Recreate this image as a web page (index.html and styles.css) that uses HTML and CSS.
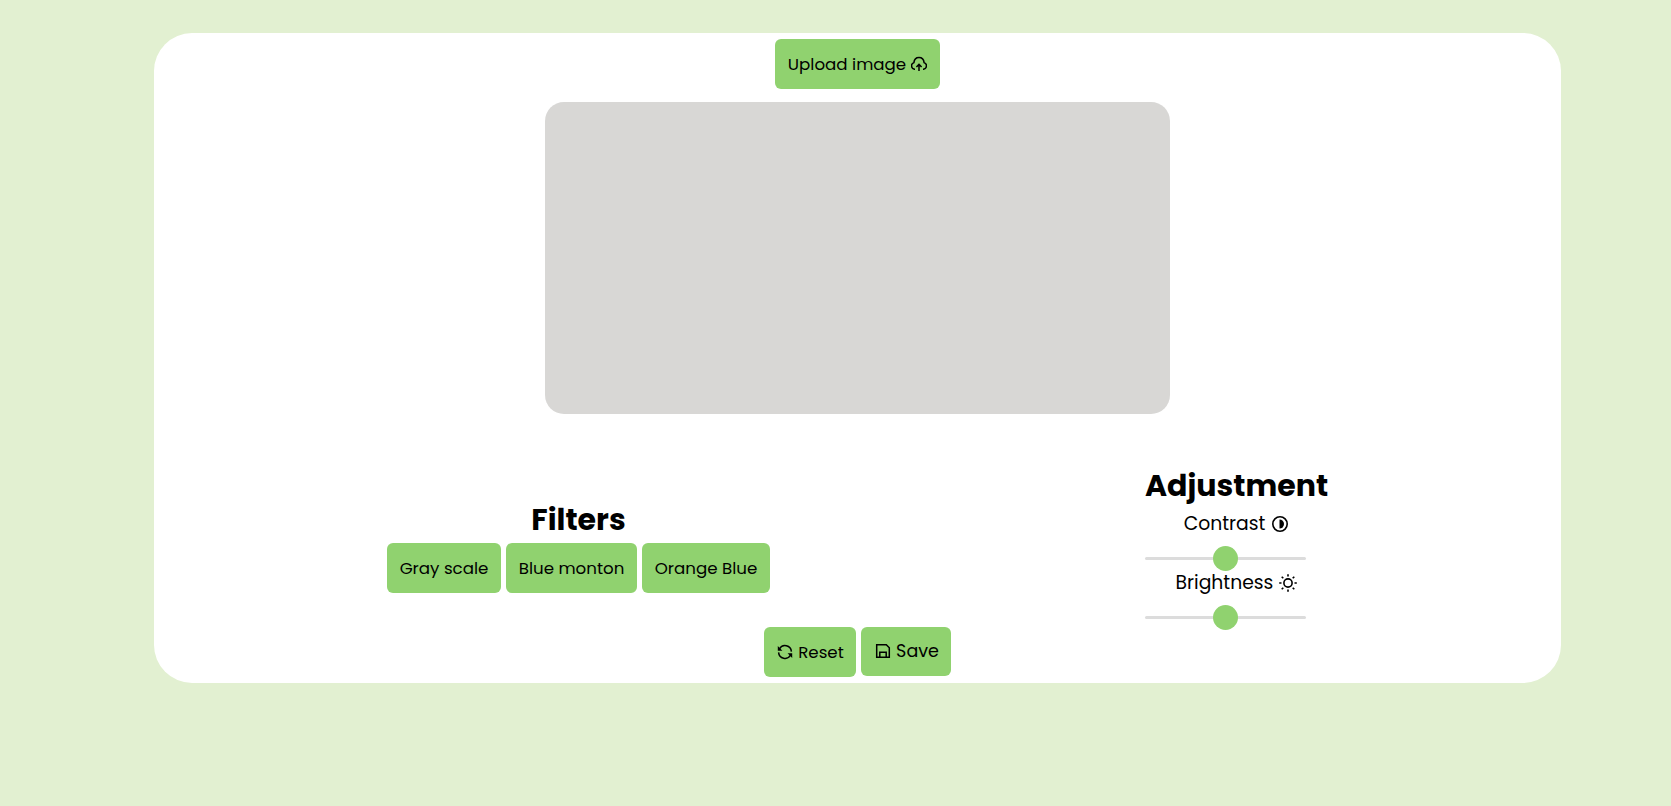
FILE: index.html
```html
<!DOCTYPE html>
<html lang="en">
<head>
<meta charset="utf-8">
<title>Image editor</title>
<link rel="stylesheet" href="styles.css">
</head>
<body>
<main class="editor">
  <button class="btn upload"><span>Upload image</span>
    <svg class="icon small" viewBox="1 1 16 16"><path d="M5 14.200H4.400a3.400 3.400 0 0 1-.5-6.600C4.200 4.500 6.200 2.400 9 2.400s4.800 2.100 5.100 5.200a3.400 3.400 0 0 1-.5 6.600H13M9 16V9.700M6.400 12 9 9.400l2.600 2.600"/></svg>
  </button>
  <div class="preview"></div>
  <div class="controls">
    <section class="filters">
      <h1>Filters</h1>
      <div class="row">
        <button class="btn gray">Gray scale</button>
        <button class="btn blue">Blue monton</button>
        <button class="btn orange">Orange Blue</button>
      </div>
    </section>
    <section class="adjust">
      <h1>Adjustment</h1>
      <div class="field">
        <div class="label"><span>Contrast</span>
          <svg class="icon" viewBox="0 0 18 18"><circle cx="9" cy="9" r="7.200"/><path class="solid" d="M8.500 4.500a4.500 4.500 0 0 1 0 9z"/></svg>
        </div>
        <div class="slider"><span class="thumb"></span></div>
      </div>
      <div class="field">
        <div class="label"><span>Brightness</span>
          <svg class="icon" viewBox="0 0 18 18"><circle cx="9" cy="9" r="4.100"/><path d="M9 .2v2.300M9 15.500v2.300M.2 9h2.300M15.500 9h2.300M2.700 2.700l1.600 1.600M13.700 13.700l1.600 1.600M2.700 15.300l1.600-1.600M13.700 4.300l1.600-1.600"/></svg>
        </div>
        <div class="slider"><span class="thumb"></span></div>
      </div>
    </section>
  </div>
  <div class="row actions">
    <button class="btn reset">
      <svg class="icon small" viewBox="1 1 16 16"><path d="M3.400 6A6.400 6.400 0 0 1 15.400 8.600M14.600 12A6.400 6.400 0 0 1 2.600 9.400"/><path class="solid" d="M1.800 3v4.800h4.600zM16.200 15v-4.800h-4.600z"/></svg>
      <span>Reset</span></button>
    <button class="btn save">
      <svg class="icon small" viewBox="0 1 16 16"><path d="M1.700 2.700h9.600l3 3v9.600H1.700zM4.800 15.300V10.200h6.400v5.100"/></svg>
      <span>Save</span></button>
  </div>
</main>
</body>
</html>
```
FILE: styles.css
```css
* { box-sizing: border-box; }
body {
  margin: 0;
  padding: 33px 110px 0 154px;
  background: #e2f0d1;
  color: #000;
  font-family: Poppins, Inter, "Open Sans", sans-serif;
}
.editor {
  display: flex;
  flex-direction: column;
  align-items: center;
  height: 650px;
  padding-top: 6px;
  border-radius: 38px;
  background: #fff;
}
.btn {
  display: flex;
  align-items: center;
  justify-content: center;
  height: 50px;
  padding: 0 12px 1px;
  border: 0;
  border-radius: 6px;
  background: #90d26f;
  color: #000;
  font: inherit;
  font-size: 16.67px;
  white-space: nowrap;
}
.icon {
  flex: none;
  width: 18px;
  height: 18px;
  fill: none;
  stroke: #000;
  stroke-width: 1.6;
}
.small {
  width: 16px;
  height: 16px;
  stroke-width: 1.5;
}
.icon .solid { fill: #000; stroke: none; }
.upload { width: 165px; gap: 5px; }
.preview {
  width: 625px;
  height: 312px;
  margin-top: 13px;
  border-radius: 19px;
  background: #d8d7d5;
}
.controls {
  display: flex;
  align-self: stretch;
  justify-content: space-between;
  align-items: flex-end;
  height: 213px;
  padding: 0 233px;
}
h1 {
  margin: 0;
  font-size: 30px;
  font-weight: 700;
  line-height: 45px;
  white-space: nowrap;
}
.row { display: flex; gap: 5px; }
.filters {
  display: flex;
  flex-direction: column;
  align-items: center;
  margin-bottom: 34px;
}
.filters .row { margin-top: 1px; }
.gray { width: 114px; }
.blue { width: 131px; }
.orange { width: 128px; }
.adjust { width: 183px; height: 164px; }
.field { width: 183px; }
.label {
  display: flex;
  align-items: center;
  justify-content: center;
  gap: 6px;
  height: 31px;
  font-size: 18.75px;
}
.slider {
  display: flex;
  align-items: center;
  justify-content: center;
  width: 161px;
  height: 3px;
  margin: 18px 0 7px;
  border-radius: 2px;
  background: #dcdcdc;
}
.thumb {
  flex: none;
  width: 25px;
  height: 25px;
  border-radius: 50%;
  background: #90d26f;
}
.reset { width: 92px; gap: 5px; padding-left: 13px; }
.save { width: 90px; height: 49px; gap: 5px; padding-left: 14px; font-size: 17.5px; }
```
